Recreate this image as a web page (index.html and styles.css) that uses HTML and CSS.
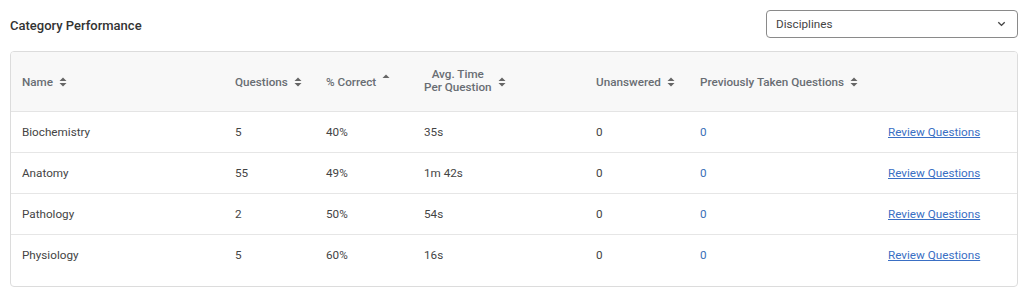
FILE: index.html
```html
<!DOCTYPE html>
<html>
<head>
<meta charset="utf-8">
<link rel="stylesheet" href="styles.css">
</head>
<body>
<div class="page">
  <div class="top">
    <h2 class="title">Category Performance</h2>
    <div class="select">
      <span>Disciplines</span>
      <svg class="chev" width="9" height="6" viewBox="0 0 9 6"><path d="M1.3 1.3 L4.5 4.4 L7.7 1.3" fill="none" stroke="#444" stroke-width="1.4"/></svg>
    </div>
  </div>
  <div class="card">
    <table class="grid">
      <colgroup>
        <col class="c1"><col class="c2"><col class="c3"><col class="c4"><col class="c5"><col class="c6"><col class="c7">
      </colgroup>
      <thead>
        <tr>
          <th><span class="h">Name <svg class="sort" viewBox="0 0 8 10"><path d="M0.5 4 L4 0.5 L7.5 4 Z M0.5 6 L4 9.5 L7.5 6 Z" fill="#666"/></svg></span></th>
          <th><span class="h">Questions <svg class="sort" viewBox="0 0 8 10"><path d="M0.5 4 L4 0.5 L7.5 4 Z M0.5 6 L4 9.5 L7.5 6 Z" fill="#666"/></svg></span></th>
          <th><span class="h">% Correct <svg class="sort up" viewBox="0 0 8 10"><path d="M0.5 4 L4 0.5 L7.5 4 Z" fill="#666"/></svg></span></th>
          <th><span class="h"><span class="two">Avg. Time<br>Per Question</span> <svg class="sort" viewBox="0 0 8 10"><path d="M0.5 4 L4 0.5 L7.5 4 Z M0.5 6 L4 9.5 L7.5 6 Z" fill="#666"/></svg></span></th>
          <th><span class="h">Unanswered <svg class="sort" viewBox="0 0 8 10"><path d="M0.5 4 L4 0.5 L7.5 4 Z M0.5 6 L4 9.5 L7.5 6 Z" fill="#666"/></svg></span></th>
          <th><span class="h">Previously Taken Questions <svg class="sort" viewBox="0 0 8 10"><path d="M0.5 4 L4 0.5 L7.5 4 Z M0.5 6 L4 9.5 L7.5 6 Z" fill="#666"/></svg></span></th>
          <th></th>
        </tr>
      </thead>
      <tbody>
        <tr><td>Biochemistry</td><td>5</td><td>40%</td><td>35s</td><td>0</td><td class="blue">0</td><td><a href="#">Review Questions</a></td></tr>
        <tr><td>Anatomy</td><td>55</td><td>49%</td><td>1m 42s</td><td>0</td><td class="blue">0</td><td><a href="#">Review Questions</a></td></tr>
        <tr><td>Pathology</td><td>2</td><td>50%</td><td>54s</td><td>0</td><td class="blue">0</td><td><a href="#">Review Questions</a></td></tr>
        <tr class="last"><td>Physiology</td><td>5</td><td>60%</td><td>16s</td><td>0</td><td class="blue">0</td><td><a href="#">Review Questions</a></td></tr>
      </tbody>
    </table>
  </div>
</div>
</body>
</html>
```
FILE: styles.css
```css
html, body {
  margin: 0;
  padding: 0;
  background: #fff;
  font-family: Roboto, "Liberation Sans", Arial, sans-serif;
}
.page {
  padding: 10px 6px 0 10px;
}
.top {
  display: flex;
  justify-content: space-between;
  align-items: center;
  height: 28px;
}
.title {
  margin: 0;
  font-size: 13px;
  font-weight: 500;
  color: #333;
  position: relative;
  top: 1px;
}
.select {
  height: 26px;
  border: 1px solid #8a8a8a;
  border-radius: 4px;
  display: flex;
  align-items: center;
  justify-content: space-between;
  padding: 0 11px 0 9px;
  box-sizing: content-box;
  width: 230px;
  font-size: 11.7px;
  color: #444;
}
.chev { display: block; }
.card {
  margin-top: 13px;
  border: 1px solid #dcdcdc;
  border-radius: 4px;
  padding-bottom: 11px;
  overflow: hidden;
}
.grid {
  width: 100%;
  border-collapse: collapse;
  table-layout: fixed;
}
.c1 { width: 213px; }
.c2 { width: 91px; }
.c3 { width: 98px; }
.c4 { width: 172px; }
.c5 { width: 104px; }
.c6 { width: 188px; }
.c7 { width: 140px; }
thead th {
  background: #f8f8f8;
  height: 59px;
  padding: 0 0 0 11px;
  text-align: left;
  font-size: 11.7px;
  font-weight: 500;
  color: #686d73;
  border-bottom: 1px solid #e4e4e4;
  white-space: nowrap;
}
.h {
  display: inline-flex;
  align-items: center;
  gap: 6px;
}
.two {
  display: inline-block;
  text-align: center;
  line-height: 13px;
  position: relative;
  top: -1px;
}
.sort {
  width: 8px;
  height: 10px;
  display: block;
}
.sort.up {
  position: relative;
  top: -3px;
}
tbody td {
  height: 40px;
  padding: 0 0 0 11px;
  font-size: 11.7px;
  color: #444;
  border-bottom: 1px solid #e6e6e6;
  white-space: nowrap;
}
tbody tr.last td { border-bottom: none; }
.blue { color: #3a6fb7; }
a {
  color: #3a6fc4;
  text-decoration: underline;
}
```
